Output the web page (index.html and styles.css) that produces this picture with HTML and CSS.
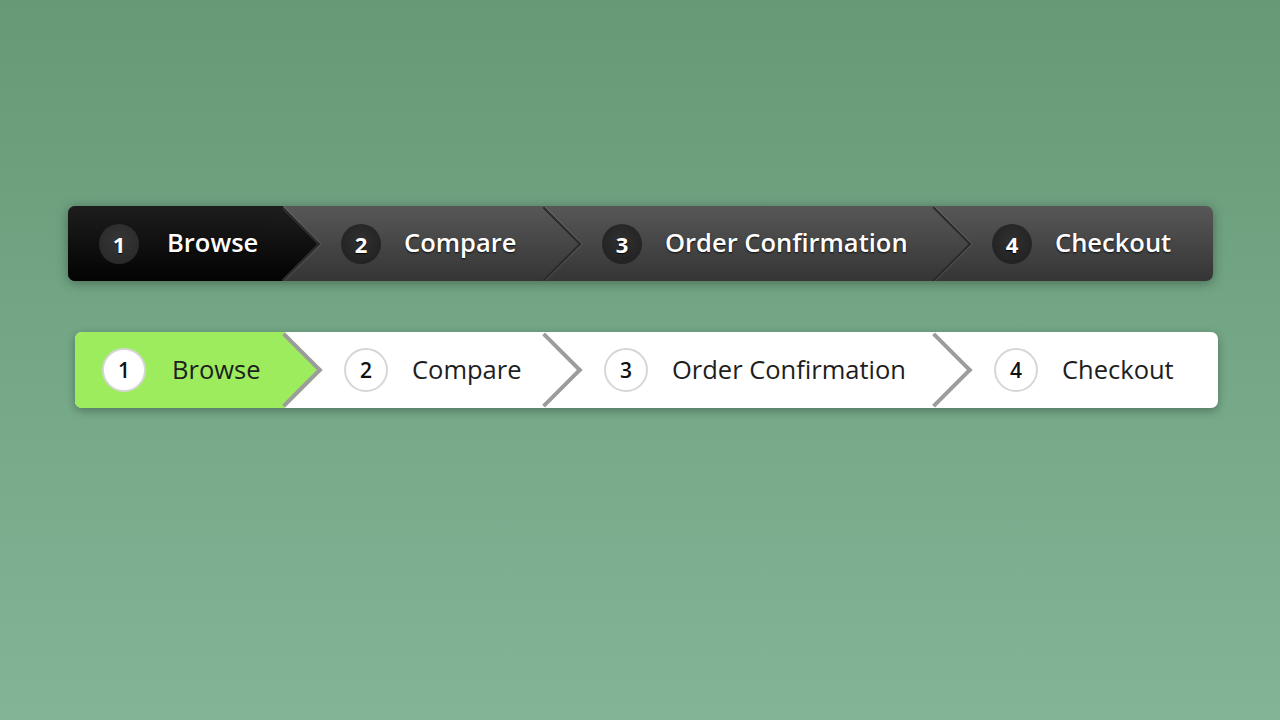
FILE: index.html
```html
<!DOCTYPE html>
<html lang="en">
<head>
  <meta charset="UTF-8">
  <title>Checkout Steps</title>
  <link rel="stylesheet" href="styles.css">
</head>
<body>
  <div class="page">
    <ol class="steps steps-dark">
      <li class="step step-1 active"><span class="num">1</span><span class="label">Browse</span></li>
      <li class="step step-2"><span class="num">2</span><span class="label">Compare</span></li>
      <li class="step step-3"><span class="num">3</span><span class="label">Order Confirmation</span></li>
      <li class="step step-4"><span class="num">4</span><span class="label">Checkout</span></li>
    </ol>

    <ol class="steps steps-light">
      <li class="step step-1 active"><span class="num">1</span><span class="label">Browse</span></li>
      <li class="step step-2"><span class="num">2</span><span class="label">Compare</span></li>
      <li class="step step-3"><span class="num">3</span><span class="label">Order Confirmation</span></li>
      <li class="step step-4"><span class="num">4</span><span class="label">Checkout</span></li>
    </ol>
  </div>
</body>
</html>
```

FILE: styles.css
```css
html,
body {
  margin: 0;
  height: 100%;
}

body {
  background: linear-gradient(#669a76, #82b596);
  font-family: 'Open Sans', 'Noto Sans', sans-serif;
}

.page {
  padding: 206px 0 0 68px;
}

.steps {
  list-style: none;
  margin: 0;
  padding: 0;
  display: flex;
  border-radius: 7px;
  overflow: hidden;
}

.step {
  position: relative;
  display: flex;
  align-items: center;
  box-sizing: border-box;
  padding-left: 58px;
  white-space: nowrap;
}

.step:not(:last-child)::after {
  content: "";
  position: absolute;
  top: 50%;
  right: 0;
  width: 53px;
  height: 53px;
  box-sizing: border-box;
  transform: translate(50%, -50%) rotate(45deg);
  z-index: 1;
}

.num,
.label {
  position: relative;
  z-index: 2;
}

.num {
  flex: none;
  display: flex;
  align-items: center;
  justify-content: center;
  border-radius: 50%;
  font-weight: 700;
}

.label {
  font-size: 25.5px;
  padding-bottom: 3px;
}

/* dark */
.steps-dark {
  width: 1145px;
  height: 75px;
  background: linear-gradient(#575757, #353535);
  box-shadow: 0 2px 12px rgba(0, 0, 0, 0.35);
}

.steps-dark .step {
  color: #fff;
}

.steps-dark .step-1 { width: 215px; padding-left: 31px; }
.steps-dark .step-2 { width: 261px; }
.steps-dark .step-3 { width: 390px; }
.steps-dark .step-4 { width: 279px; }

.steps-dark .step.active {
  background: linear-gradient(#1d1d1d, #030303);
}

.steps-dark .step::after {
  border-top: 2px solid #2b2b2b;
  border-right: 2px solid #2b2b2b;
  box-shadow: 1px -1px 0 rgba(255, 255, 255, 0.12);
}

.steps-dark .step.active::after {
  background: linear-gradient(135deg, #1d1d1d, #030303);
}

.steps-dark .num {
  width: 40px;
  height: 40px;
  margin-right: 23px;
  font-size: 22px;
  background: radial-gradient(circle at 50% 40%, #303030, #1e1e1e);
  color: #fff;
  text-shadow: 0 1px 1px #000;
}

.steps-dark .step-1 .num {
  margin-right: 28px;
}

.steps-dark .step.active .num {
  background: radial-gradient(circle at 50% 40%, #363636, #262626);
}

.steps-dark .label {
  font-weight: 600;
  text-shadow: 0 1px 2px rgba(0, 0, 0, 0.8);
}

/* light */
.steps-light {
  width: 1143px;
  height: 76px;
  margin: 51px 0 0 7px;
  background: #fff;
  box-shadow: 0 3px 10px rgba(0, 0, 0, 0.3);
}

.steps-light .step {
  color: #1e1e1e;
  padding-left: 59px;
}

.steps-light .step-1 { width: 210px; padding-left: 27px; }
.steps-light .step-2 { width: 260px; }
.steps-light .step-3 { width: 390px; }
.steps-light .step-4 { width: 283px; }

.steps-light .step.active {
  background: #9cec5e;
}

.steps-light .step::after {
  border-top: 4px solid #9c9c9c;
  border-right: 4px solid #9c9c9c;
}

.steps-light .step.active::after {
  background: #9cec5e;
}

.steps-light .num {
  width: 44px;
  height: 44px;
  margin-right: 24px;
  box-sizing: border-box;
  border: 2px solid #d6d6d6;
  background: #fff;
  color: #111;
  font-size: 21px;
  font-weight: 600;
}

.steps-light .step-1 .num {
  margin-right: 26px;
}
```
